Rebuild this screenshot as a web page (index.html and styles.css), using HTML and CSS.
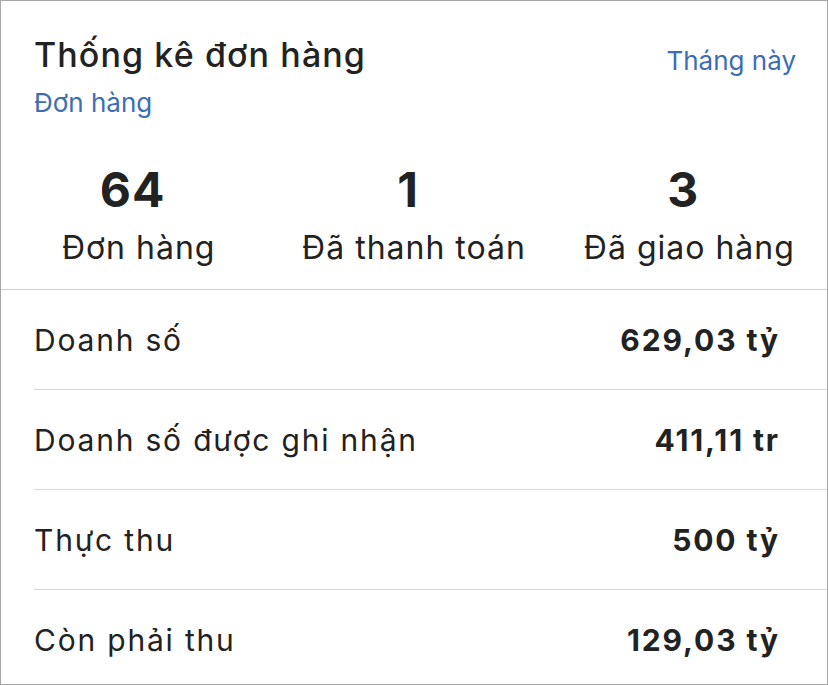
FILE: index.html
```html
<!DOCTYPE html>
<html lang="vi">
<head>
<meta charset="utf-8">
<link rel="stylesheet" href="styles.css">
</head>
<body>
<div class="card">
  <div class="header">
    <div class="titles">
      <div class="title">Thống kê đơn hàng</div>
      <div class="subtitle">Đơn hàng</div>
    </div>
    <div class="period">Tháng này</div>
  </div>
  <div class="stats">
    <div class="stat"><div class="num">64</div><div class="label">Đơn hàng</div></div>
    <div class="stat"><div class="num">1</div><div class="label">Đã thanh toán</div></div>
    <div class="stat"><div class="num">3</div><div class="label">Đã giao hàng</div></div>
  </div>
  <div class="rows">
    <div class="row"><span class="name">Doanh số</span><span class="value">629,03 tỷ</span></div>
    <div class="row"><span class="name">Doanh số được ghi nhận</span><span class="value">411,11 tr</span></div>
    <div class="row"><span class="name">Thực thu</span><span class="value">500 tỷ</span></div>
    <div class="row"><span class="name">Còn phải thu</span><span class="value">129,03 tỷ</span></div>
  </div>
</div>
</body>
</html>
```
FILE: styles.css
```css
* { box-sizing: border-box; }
html, body { margin: 0; padding: 0; background: #fff; }
body { font-family: Inter, "Noto Sans", sans-serif; color: #222; }
.card {
  width: 828px;
  height: 685px;
  border: 1px solid #a6a6a6;
  background: #fff;
  overflow: hidden;
}
.header {
  display: flex;
  justify-content: space-between;
  align-items: flex-start;
  padding: 32px 31px 0 33px;
  height: 136px;
}
.title { font-size: 34px; line-height: 44px; font-weight: 500; letter-spacing: 1.1px; color: #222; }
.subtitle { font-size: 26px; line-height: 32px; color: #3d6db4; margin-top: 10px; letter-spacing: 0; }
.period { font-size: 26px; line-height: 32px; color: #3d6db4; margin-top: 12px; letter-spacing: 0; }
.stats {
  display: grid;
  grid-template-columns: 1fr 1fr 1fr;
  height: 153px;
  padding-top: 25px;
  border-bottom: 1px solid #cfcfcf;
}
.stat { display: flex; flex-direction: column; align-items: center; }
.num { font-size: 48px; line-height: 56px; font-weight: 700; margin-right: 12px; letter-spacing: 1px; }
.label { font-size: 32px; line-height: 40px; margin-top: 10px; letter-spacing: 1px; }
.rows { padding-left: 33px; }
.row {
  display: flex;
  justify-content: space-between;
  align-items: center;
  height: 100px;
  padding-right: 47px;
  border-bottom: 1px solid #d6d6d6;
  font-size: 30px;
  letter-spacing: 1.8px;
}
.row:last-child { border-bottom: none; }
.value { font-weight: 700; letter-spacing: 1.9px; }
```
